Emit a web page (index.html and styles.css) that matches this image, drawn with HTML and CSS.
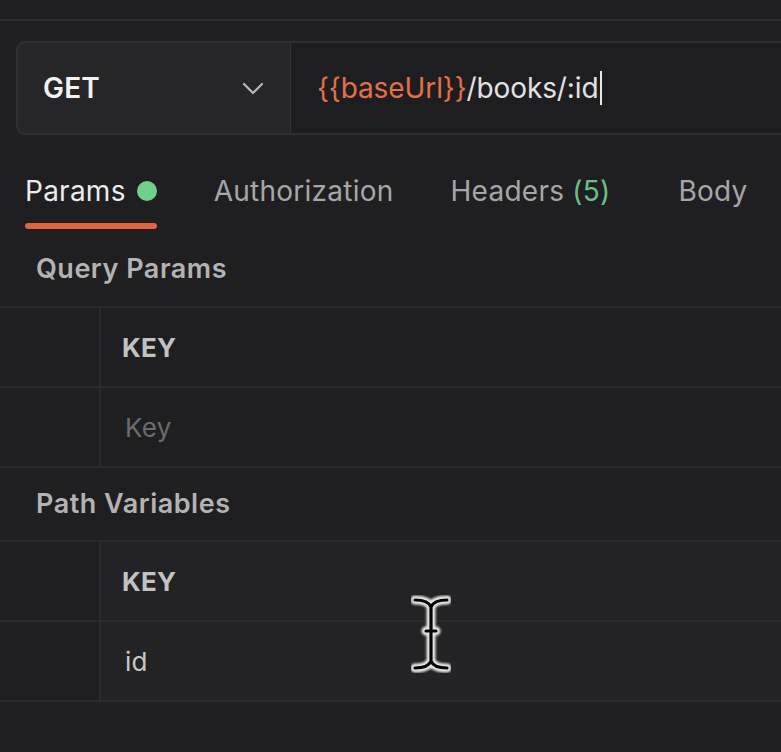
FILE: index.html
```html
<!DOCTYPE html>
<html>
<head>
<meta charset="utf-8">
<link rel="stylesheet" href="styles.css">
</head>
<body>
<div class="page">
  <div class="topstrip"></div>
  <div class="reqbar">
    <div class="method">
      <span class="method-name">GET</span>
      <svg class="chev" width="22" height="14" viewBox="0 0 22 14"><path d="M2 2 L11 11 L20 2" fill="none" stroke="#b9b9b9" stroke-width="2.2" stroke-linecap="round" stroke-linejoin="round"/></svg>
    </div>
    <div class="url"><span class="var">{{baseUrl}}</span><span class="path">/books/:id</span><span class="caret"></span></div>
  </div>
  <div class="tabs">
    <div class="tab active"><span>Params</span><span class="dot"></span></div>
    <div class="tab">Authorization</div>
    <div class="tab">Headers <span class="count">(5)</span></div>
    <div class="tab body-tab">Body</div>
  </div>
  <div class="section-title">Query Params</div>
  <div class="table">
    <div class="row">
      <div class="cell-check"></div>
      <div class="cell head">KEY</div>
    </div>
    <div class="row">
      <div class="cell-check"></div>
      <div class="cell placeholder">Key</div>
    </div>
  </div>
  <div class="section-title path-title">Path Variables</div>
  <div class="table path-table">
    <div class="row">
      <div class="cell-check"></div>
      <div class="cell head">KEY</div>
    </div>
    <div class="row">
      <div class="cell-check"></div>
      <div class="cell value">id</div>
    </div>
  </div>
  <svg class="ibeam" width="40" height="78" viewBox="0 0 40 78">
    <defs>
      <filter id="soft" x="-20%" y="-20%" width="140%" height="140%">
        <feGaussianBlur stdDeviation="0.8"/>
      </filter>
    </defs>
    <g fill="none" stroke-linecap="round" stroke-linejoin="round">
      <path filter="url(#soft)" d="M4 5 C12 5 18 7 20 12 C22 7 28 5 36 5 M20 12 V34 M15 36 H25 M20 38 V66 C18 71 12 73 4 73 M20 66 C22 71 28 73 36 73" stroke="#e6e6e6" stroke-width="9"/>
      <path d="M4 5 C12 5 18 7 20 12 C22 7 28 5 36 5 M20 12 V34 M15 36 H25 M20 38 V66 C18 71 12 73 4 73 M20 66 C22 71 28 73 36 73" stroke="#050505" stroke-width="3.2"/>
    </g>
  </svg>
</div>
</body>
</html>
```

FILE: styles.css
```css
* { box-sizing: border-box; }
html, body { margin: 0; padding: 0; }
body {
  background: #1f1f21;
  font-family: Inter, "Noto Sans", "Liberation Sans", sans-serif;
  color: #e6e6e6;
  overflow: hidden;
}
.page {
  position: relative;
  width: 781px;
  height: 752px;
  overflow: hidden;
}
.topstrip {
  height: 21px;
  border-bottom: 2px solid #2b2b2d;
}
.reqbar {
  display: flex;
  margin-top: 20px;
  margin-left: 16px;
  height: 94px;
}
.method {
  width: 275px;
  flex: none;
  display: flex;
  align-items: center;
  justify-content: space-between;
  padding: 0 26px 0 25px;
  background: #262628;
  border: 2px solid #2f2f31;
  border-right: 1px solid #333335;
  border-radius: 9px 0 0 9px;
}
.method-name {
  font-size: 28px;
  font-weight: 600;
  color: #f2f2f2;
  letter-spacing: 0.2px;
}
.chev { margin-top: 2px; }
.url {
  flex: 1;
  display: flex;
  align-items: center;
  padding-left: 26px;
  background: #1e1e20;
  border-top: 2px solid #2e2e30;
  border-bottom: 2px solid #2e2e30;
  font-size: 28px;
  letter-spacing: -0.1px;
  white-space: nowrap;
}
.var { color: #e46f4b; }
.path { color: #e2e2e2; }
.caret {
  display: inline-block;
  width: 2px;
  height: 34px;
  background: #e8e8e8;
  margin-left: 1px;
}
.tabs {
  display: flex;
  align-items: center;
  gap: 57px;
  margin-top: 27px;
  padding-left: 25px;
  height: 58px;
  position: relative;
}
.tab {
  font-size: 28px;
  letter-spacing: 0.25px;
  color: #a6a6a6;
  white-space: nowrap;
  height: 58px;
  display: flex;
  align-items: center;
}
.tab.active {
  color: #ececec;
  gap: 11px;
  position: relative;
}
.tab.active::after {
  content: "";
  position: absolute;
  left: 0;
  right: 0;
  bottom: -9px;
  height: 6px;
  border-radius: 3px;
  background: #e0643f;
}
.dot {
  width: 20px;
  height: 20px;
  border-radius: 50%;
  background: #6fd08e;
}
.count { color: #6cbf8b; margin-left: 8px; }
.body-tab { margin-left: 11px; }
.section-title {
  font-size: 27px;
  font-weight: 600;
  letter-spacing: 0.5px;
  color: #b3b3b3;
  padding-left: 36px;
  height: 40px;
  display: flex;
  align-items: center;
  margin-top: 28px;
}
.table {
  margin-top: 18px;
  border-top: 2px solid #2a2a2c;
}
.row {
  display: flex;
  height: 80px;
  border-bottom: 2px solid #2a2a2c;
}
.cell-check {
  width: 101px;
  flex: none;
  border-right: 2px solid #2a2a2c;
}
.cell {
  flex: 1;
  display: flex;
  align-items: center;
  padding-left: 21px;
  font-size: 26px;
  letter-spacing: 0.3px;
}
.head {
  font-weight: 700;
  color: #c2c2c2;
}
.placeholder {
  color: #6b6b6d;
  padding-left: 24px;
}
.value {
  color: #c8c8c8;
  padding-left: 24px;
}
.path-title { margin-top: 15px; }
.path-table { margin-top: 17px; }
.path-table .cell { background: #232325; }
.path-table .cell-check { background: #1e1e20; }
.ibeam {
  position: absolute;
  left: 411px;
  top: 595px;
}
```
